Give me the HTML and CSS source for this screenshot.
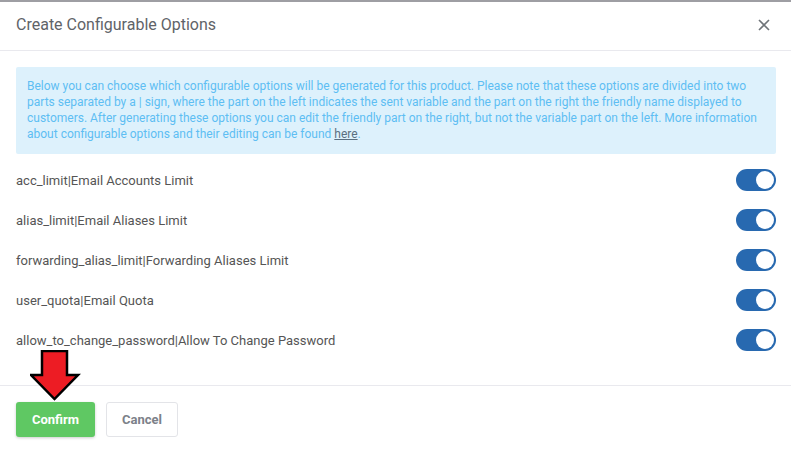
FILE: index.html
```html
<!DOCTYPE html>
<html lang="en">
<head>
  <meta charset="UTF-8">
  <title>Create Configurable Options</title>
  <link rel="stylesheet" href="styles.css">
</head>
<body>
  <div class="backdrop-strip"></div>
  <div class="modal">
    <div class="modal-header">
      <h4 class="modal-title">Create Configurable Options</h4>
      <span class="close">
        <svg width="12" height="12" viewBox="0 0 12 12"><path d="M1 1L11 11M11 1L1 11" stroke="#6f7479" stroke-width="1.6" fill="none"/></svg>
      </span>
    </div>
    <div class="modal-body">
      <div class="info-box">
        Below you can choose which configurable options will be generated for this product. Please note that these options are divided into two parts separated by a | sign, where the part on the left indicates the sent variable and the part on the right the friendly name displayed to customers. After generating these options you can edit the friendly part on the right, but not the variable part on the left. More information about configurable options and their editing can be found <a href="#">here</a>.
      </div>
      <div class="option-list">
        <div class="option-row"><span>acc_limit|Email Accounts Limit</span><span class="switch"><span class="knob"></span></span></div>
        <div class="option-row"><span>alias_limit|Email Aliases Limit</span><span class="switch"><span class="knob"></span></span></div>
        <div class="option-row"><span>forwarding_alias_limit|Forwarding Aliases Limit</span><span class="switch"><span class="knob"></span></span></div>
        <div class="option-row"><span>user_quota|Email Quota</span><span class="switch"><span class="knob"></span></span></div>
        <div class="option-row"><span>allow_to_change_password|Allow To Change Password</span><span class="switch"><span class="knob"></span></span></div>
      </div>
    </div>
    <div class="modal-footer">
      <button class="btn btn-confirm">Confirm</button>
      <button class="btn btn-cancel">Cancel</button>
      <svg class="arrow" width="52" height="52" viewBox="0 0 52 52">
        <path d="M12 1H37V25H48L24.5 49L1 25H12Z" fill="#ed1c24" stroke="#000" stroke-width="2.5" stroke-linejoin="miter"/>
      </svg>
    </div>
  </div>
</body>
</html>
```

FILE: styles.css
```css
body {
  margin: 0;
  background-color: #fff;
  font-family: Roboto, "Liberation Sans", Arial, sans-serif;
  color: #555;
}

.backdrop-strip {
  height: 2px;
  background-color: #9e9ea3;
}

.modal {
  width: 791px;
  background-color: #fff;
}

.modal-header {
  display: flex;
  justify-content: space-between;
  align-items: center;
  height: 48px;
  padding: 0 16px;
  border-bottom: 1px solid #e9e9ee;
}

.modal-title {
  margin: 0 0 4px 0;
  font-size: 16px;
  font-weight: 400;
  color: #5f6368;
}

.close {
  display: flex;
  margin-right: 5px;
  margin-bottom: 2px;
}

.modal-body {
  padding: 16px 15px 25px 16px;
}

.info-box {
  background-color: #ddf1fc;
  color: #5ebef3;
  font-size: 12px;
  line-height: 16px;
  padding: 11px 11px 12px 11px;
  border-radius: 2px;
}

.info-box a {
  color: #5a6f80;
  text-decoration: underline;
}

.option-list {
  margin-top: 6px;
}

.option-row {
  display: flex;
  justify-content: space-between;
  align-items: center;
  height: 40px;
  font-size: 13px;
  color: #555;
}

.switch {
  position: relative;
  display: inline-block;
  width: 40px;
  height: 22px;
  border-radius: 11px;
  background-color: #2869b0;
}

.knob {
  position: absolute;
  top: 2px;
  right: 2px;
  width: 18px;
  height: 18px;
  border-radius: 50%;
  background-color: #fff;
}

.modal-footer {
  position: relative;
  display: flex;
  gap: 11px;
  padding: 16px;
  border-top: 1px solid #e9e9ee;
}

.btn {
  height: 35px;
  border-radius: 3px;
  font-family: Roboto, "Liberation Sans", Arial, sans-serif;
  font-size: 13px;
  font-weight: 700;
  cursor: pointer;
}

.btn-confirm {
  width: 79px;
  border: none;
  background-color: #5fc863;
  color: #fff;
  box-shadow: 0 1px 3px rgba(0, 0, 0, 0.2);
}

.btn-cancel {
  width: 72px;
  border: 1px solid #e3e4e8;
  background-color: #fff;
  color: #7c8189;
}

.arrow {
  position: absolute;
  left: 30px;
  top: -36px;
}
```
